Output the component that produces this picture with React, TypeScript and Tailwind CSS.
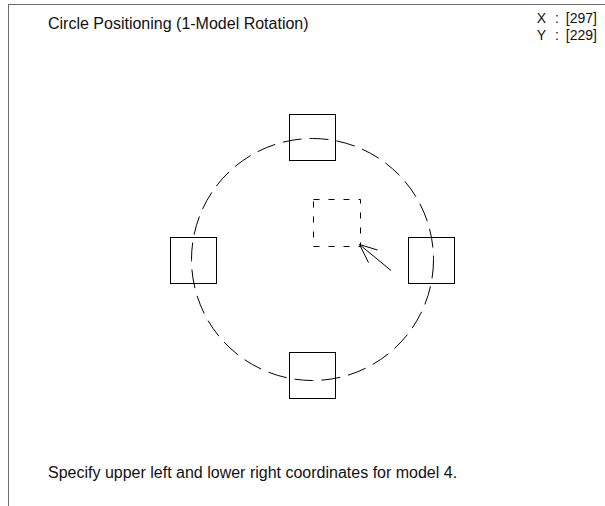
import React from "react";

export default function App() {
  return (
    <div
      className="w-[605px] h-[506px] bg-white overflow-hidden pt-[4px] pl-[8px]"
      style={{ fontFamily: '"Liberation Sans", Arial, sans-serif' }}
    >
      <div className="h-[502px] border-l border-t border-[#6b6b6b] flex flex-col text-[#111]">
        <div className="h-[40px] flex justify-between pl-[39px] pr-[8px]">
          <div className="pt-[10px] text-[16px] leading-[18px]">Circle Positioning (1-Model Rotation)</div>
          <div className="pt-[7px] text-[14px] leading-[13px] grid grid-cols-[auto_auto_auto]">
            <span className="pr-[9px]">X</span>
            <span className="pr-[7px]">:</span>
            <span>[297]</span>
            <span className="pr-[9px]">Y</span>
            <span className="pr-[7px]">:</span>
            <span>[229]</span>
          </div>
        </div>
        <svg width="596" height="400" viewBox="9 45 596 400" className="block">
          <g fill="none" stroke="#000" strokeWidth="1">
            <circle cx="312.5" cy="259.5" r="121" strokeDasharray="19 8" />
            <rect x="289.5" y="114.5" width="46" height="46" />
            <rect x="170.5" y="237.5" width="46" height="46" />
            <rect x="408.5" y="237.5" width="46" height="46" />
            <rect x="289.5" y="352.5" width="46" height="46" />
            <rect x="313.5" y="199.5" width="47" height="47" strokeDasharray="6 9" />
            <path d="M391 270.5 L359.5 244.5 M359.5 244.5 L377.5 250 M359.5 244.5 L368.5 262.5" />
          </g>
        </svg>
        <div className="pt-[19px] pl-[39px] text-[16px] leading-[18px]">
          Specify upper left and lower right coordinates for model 4.
        </div>
      </div>
    </div>
  );
}
